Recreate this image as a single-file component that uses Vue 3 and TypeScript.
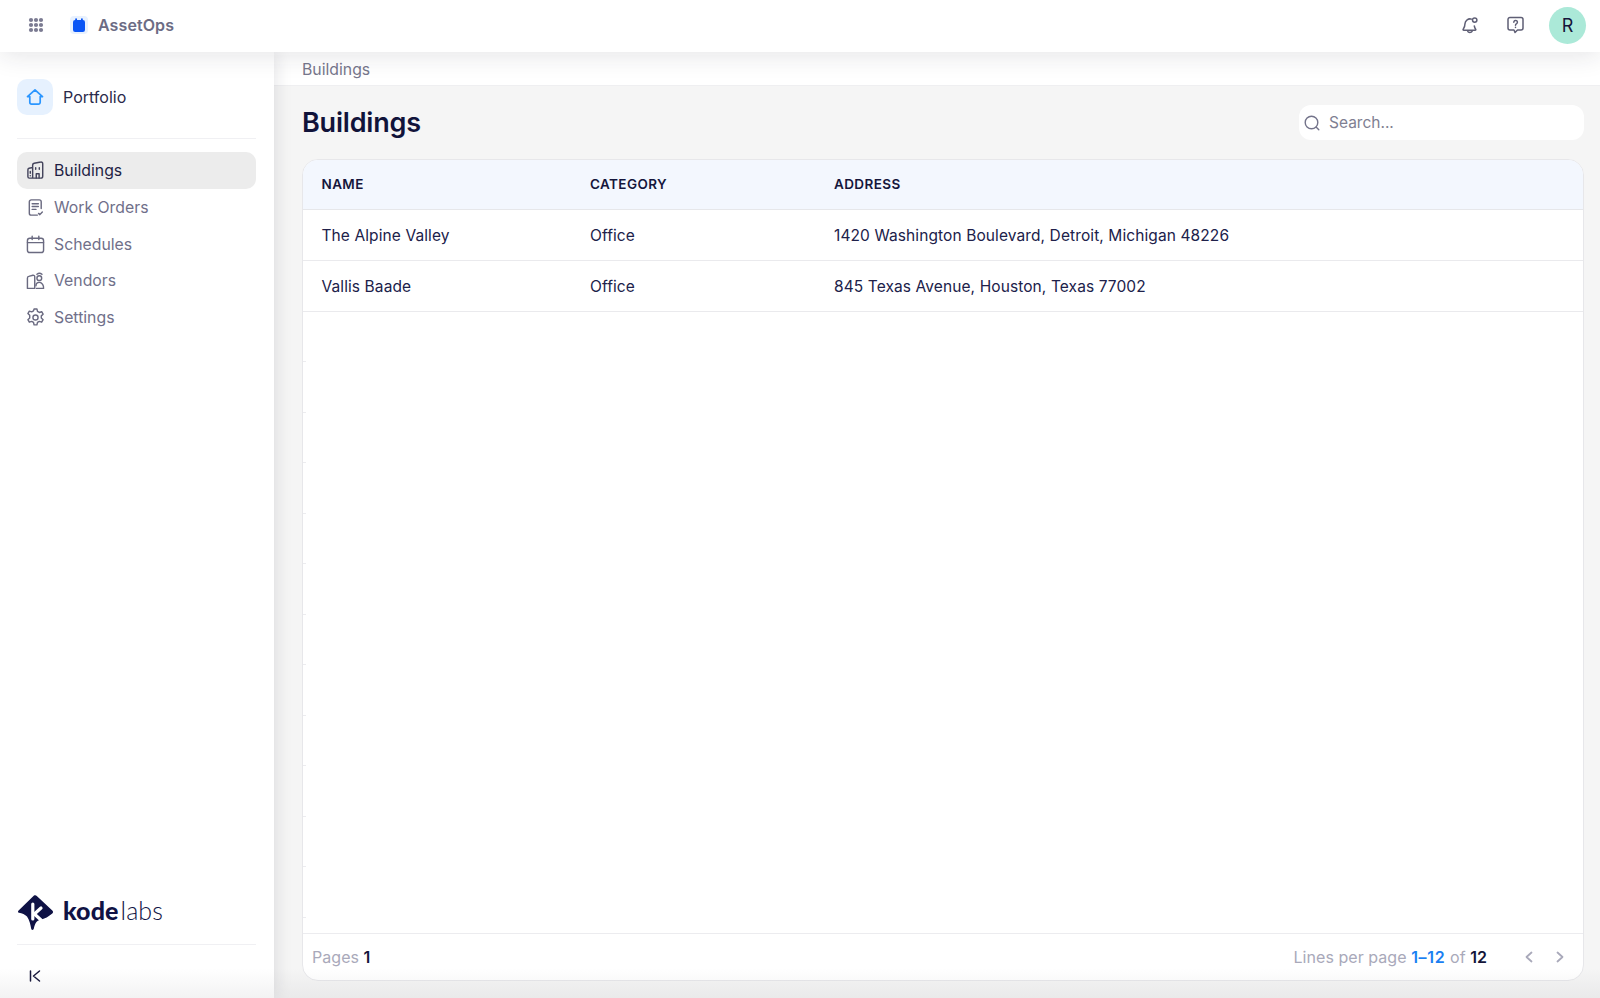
<script setup lang="ts">
interface Building { name: string; category: string; address: string }
const buildings: Building[] = [
  { name: 'The Alpine Valley', category: 'Office', address: '1420 Washington Boulevard, Detroit, Michigan 48226' },
  { name: 'Vallis Baade', category: 'Office', address: '845 Texas Avenue, Houston, Texas 77002' },
]
const emptyRows = 12
const nav = ['Buildings', 'Work Orders', 'Schedules', 'Vendors', 'Settings']
const dots: number[][] = []
for (const y of [3, 8, 13]) for (const x of [3, 8, 13]) dots.push([x, y])
</script>

<template>
  <div class="app">
    <header class="topbar">
      <div class="top-left">
        <svg class="grid-ico" width="16" height="16" viewBox="0 0 16 16">
          <circle v-for="(d, i) in dots" :key="i" :cx="d[0]" :cy="d[1]" r="2.1" fill="#7b7b92" />
        </svg>
        <span class="app-logo">
          <svg width="12" height="14" viewBox="0 0 12 14">
            <rect x="0" y="2" width="12" height="12" rx="2.2" fill="#0a55f5" />
            <rect x="2.2" y="0.2" width="1.8" height="3.6" rx="0.9" fill="#0a55f5" />
            <rect x="8" y="0.2" width="1.8" height="3.6" rx="0.9" fill="#0a55f5" />
          </svg>
        </span>
        <span class="app-name">AssetOps</span>
      </div>
      <div class="top-right">
        <svg class="bell" width="18" height="18" viewBox="0 0 18 18" fill="none" stroke="#5f5f75" stroke-width="1.5" stroke-linecap="round" stroke-linejoin="round">
          <path d="M10.4 3.1A5 5 0 0 0 4 7.6c0 3.4-1.3 5-2 6 0 .4 .2.6.6.6h11.6c.5 0 .7-.3.6-.7-.6-.8-1.3-1.7-1.5-3.6" />
          <path d="M6.8 15.4c.5 1.3 3.600 1.300 4.300 0" />
          <circle cx="13.700" cy="4.100" r="2.200" />
        </svg>
        <svg class="help" width="17" height="18" viewBox="0 0 17 18" fill="none" stroke="#5f5f75" stroke-width="1.5" stroke-linecap="round" stroke-linejoin="round">
          <path d="M3 1.500h11a2 2 0 0 1 2 2v8.500a2 2 0 0 1-2 2h-3.500l-2.500 2.500-1-2.500h-4a2 2 0 0 1-2-2v-8.500a2 2 0 0 1 2-2z" />
          <path d="M6.800 6.200a1.800 1.800 0 1 1 2.800 1.500c-.7.400-1.100.8-1.100 1.500" />
          <path d="M8.500 11.300v.1" />
        </svg>
        <div class="avatar">R</div>
      </div>
    </header>

    <div class="body">
      <aside class="sidebar">
        <div class="portfolio">
          <span class="home-tile">
            <svg width="18" height="18" viewBox="0 0 18 18" fill="none" stroke="#2b96ff" stroke-width="1.700" stroke-linejoin="round" stroke-linecap="round">
              <path d="M1.500 8.600 9 1.800l7.500 6.800h-2.300v5.700a1.800 1.800 0 0 1-1.800 1.800H5.600a1.800 1.800 0 0 1-1.800-1.800V8.600z" />
            </svg>
          </span>
          <span class="portfolio-name">Portfolio</span>
        </div>
        <nav class="nav">
          <a v-for="(item, i) in nav" :key="item" class="nav-item" :class="{ active: i === 0 }">
            <svg class="nav-ico" width="20" height="20" viewBox="0 0 20 20" fill="none" :stroke="i === 0 ? '#44445c' : '#6a6a80'" stroke-width="1.500" stroke-linecap="round" stroke-linejoin="round">
              <template v-if="i === 0">
                <path d="M7 18V4.200c0-1 .7-1.700 1.600-1.900l7-1.200c1-.2 2 .6 2 1.700V16a2 2 0 0 1-2 2H3.500a1.500 1.500 0 0 1-1.500-1.500V9.200c0-.8.500-1.400 1.200-1.600L7 6.800" />
                <path d="M4.500 11v2M10.200 7v1.800M14 7v1.800M10.800 18v-4.500h3v4.500M4.500 15.500v.1" />
              </template>
              <template v-else-if="i === 1">
                <path d="M16 11V4a2 2 0 0 0-2-2H5.500a2 2 0 0 0-2 2v12a2 2 0 0 0 2 2H12" />
                <path d="M6.500 6h6.500M6.500 9h6.500M6.500 12h4M13.200 16.200l1.400 1.300 2.600-2.800" />
              </template>
              <template v-else-if="i === 2">
                <rect x="1.500" y="3.500" width="17" height="15" rx="2.500" />
                <path d="M1.500 8h17M6.500 1.200v3.500M13.500 1.200v3.500" />
              </template>
              <template v-else-if="i === 3">
                <path d="M1.500 18.300V7.500c0-.9.600-1.600 1.400-1.800l4.300-1.200c1-.3 2 .5 2 1.600v11.900M1.500 18.300h7.700" />
                <circle cx="14" cy="7.500" r="2.500" />
                <path d="M11 18.300h7.500c.3-3-1.500-6.300-4.500-6.300s-3.500 2.500-3.500 3.500" />
                <path d="M11.500 3.500a4 4 0 0 1 5.300 0" />
              </template>
              <template v-else>
                <circle cx="10" cy="10" r="2.700" />
                <path d="M8.500 1h3l.6 2.600 1.900 1.100 2.500-.8 1.500 2.600-1.900 1.800v2.200l1.900 1.800-1.500 2.600-2.500-.8-1.900 1.100-.6 2.600h-3l-.6-2.600-1.900-1.100-2.500.8-1.500-2.600 1.900-1.800V7.700L2 5.900l1.500-2.600 2.500.8 1.900-1.100z" />
              </template>
            </svg>
            <span>{{ item }}</span>
          </a>
        </nav>
        <div class="side-bottom">
          <div class="brand">
            <svg width="36" height="36" viewBox="0 0 36 36">
              <path d="M16 .5c1-.6 2-.4 2.800.4l15.500 14.500c1 1 1 2.200 0 3.100-3.500 3-7.500 5.400-12 6.300-3.600.8-5.500 4-6.400 8.500-.3 1.900-2.200 2.200-2.700.4-.8-4.300-1.800-9-4.200-12.200C7.200 19.500 4 18.500 1 17.800c-1.200-.3-1.300-1.400-.4-2.200z" fill="#0f1245" />
              <path d="M14.800 9v15" stroke="#fff" stroke-width="3.200" stroke-linecap="round" fill="none" />
              <path d="M23 13l-6.600 6 6.600 6" stroke="#fff" stroke-width="3.200" fill="none" stroke-linecap="round" stroke-linejoin="round" />
            </svg>
            <span class="brand-text"><b>kode</b><i>labs</i></span>
          </div>
          <div class="collapse">
            <svg width="14" height="14" viewBox="0 0 14 14" fill="none" stroke="#16163a" stroke-width="1.500" stroke-linecap="round" stroke-linejoin="round">
              <path d="M2.500 2v10M11.500 2 5.500 7l6 5" />
            </svg>
          </div>
        </div>
      </aside>

      <main class="main">
        <div class="crumb">Buildings</div>
        <div class="content">
          <div class="title-row">
            <h1>Buildings</h1>
            <label class="search">
              <svg width="16" height="16" viewBox="0 0 16 16" fill="none" stroke="#73738a" stroke-width="1.400" stroke-linecap="round">
                <circle cx="7.500" cy="7.500" r="6.300" />
                <path d="M12.300 12.300 14.800 14.800" />
              </svg>
              <span>Search...</span>
            </label>
          </div>
          <section class="table-card">
            <div class="table-scroll">
              <div class="row head">
                <div>NAME</div><div>CATEGORY</div><div>ADDRESS</div>
              </div>
              <div v-for="b in buildings" :key="b.name" class="row data">
                <div>{{ b.name }}</div><div>{{ b.category }}</div><div>{{ b.address }}</div>
              </div>
              <div v-for="n in emptyRows" :key="n" class="row blank"></div>
            </div>
            <footer class="table-foot">
              <div class="muted">Pages <b class="dark">1</b></div>
              <div class="foot-right">
                <span class="muted">Lines per page <b class="blue">1–12</b> of <b class="dark">12</b></span>
                <span class="pager">
                  <svg width="12" height="14" viewBox="0 0 12 14" fill="none" stroke="#a9a9ba" stroke-width="1.800" stroke-linecap="round" stroke-linejoin="round"><path d="M8.500 2.500 3.500 7l5 4.500" /></svg>
                  <svg width="12" height="14" viewBox="0 0 12 14" fill="none" stroke="#a9a9ba" stroke-width="1.800" stroke-linecap="round" stroke-linejoin="round"><path d="M3.500 2.500 8.500 7l-5 4.500" /></svg>
                </span>
              </div>
            </footer>
          </section>
        </div>
      </main>
      <div class="bottom-fade"></div>
    </div>
  </div>
</template>

<style>
html, body { margin: 0; height: 100%; overflow: hidden; background: #fff; }
</style>

<style scoped>
.app {
  width: 1600px; height: 998px; display: flex; flex-direction: column;
  font-family: Inter, "Liberation Sans", sans-serif; color: #1a1a3c; overflow: hidden;
}
.topbar {
  height: 52px; flex: none; display: flex; align-items: center; justify-content: space-between;
  padding: 0 14px 2px 28px; box-sizing: border-box; background: #fff; position: relative; z-index: 3;
  box-shadow: 0 3px 26px rgba(30, 30, 50, .12);
}
.top-left { display: flex; align-items: center; }
.grid-ico { margin-right: 26px; }
.app-logo {
  width: 18px; height: 18px; border-radius: 4px; background: #e8f1fe;
  display: flex; align-items: center; justify-content: center; margin-right: 10px;
}
.app-name { font-size: 16px; font-weight: 600; color: #6c6c84; letter-spacing: .1px; }
.top-right { display: flex; align-items: center; }
.bell { margin-right: 28px; }
.help { margin-right: 25px; }
.avatar {
  width: 37px; height: 37px; border-radius: 50%; background: #abe9d8; color: #16163a;
  font-size: 18px; display: flex; align-items: center; justify-content: center;
}
.body { flex: 1; display: flex; min-height: 0; position: relative; }
.sidebar {
  width: 274px; flex: none; background: #fff; display: flex; flex-direction: column;
  padding: 27px 18px 0 17px; box-sizing: border-box; position: relative; z-index: 2;
  box-shadow: 2px 0 16px rgba(30, 30, 50, .11);
}
.portfolio {
  display: flex; align-items: center; gap: 10px; height: 36px;
  padding-bottom: 23px; border-bottom: 1px solid #f0f0f3; margin-bottom: 13.400px;
}
.home-tile {
  width: 36px; height: 36px; border-radius: 10px; background: #e6f1fe;
  display: flex; align-items: center; justify-content: center;
}
.portfolio-name { font-size: 16px; color: #2a2a4a; }
.nav { display: flex; flex-direction: column; }
.nav-item {
  height: 36.700px; display: flex; align-items: center; gap: 9px; padding-left: 9px;
  border-radius: 10px; font-size: 15.800px; color: #70708a;
}
.nav-item.active { background: #ececec; color: #1f1f45; }
.nav-ico { flex: none; width: 19px; height: 19px; }
.side-bottom { margin-top: auto; }
.brand {
  display: flex; align-items: center; gap: 9px; height: 36px;
  padding: 0 0 13px 1px; border-bottom: 1px solid #f0f0f3;
}
.brand-text {
  font-family: Lato, "Liberation Sans", sans-serif; font-size: 25px; color: #101345;
  letter-spacing: .1px; display: flex; position: relative; top: -3px;
}
.brand-text b { font-weight: 900; }
.brand-text i { font-style: normal; font-weight: 300; margin-left: 2px; }
.collapse {
  height: 53px; display: flex; align-items: center; padding-left: 11px; padding-top: 8px; box-sizing: border-box;
}
.main { flex: 1; min-width: 0; display: flex; flex-direction: column; background: #f5f5f5; }
.crumb {
  height: 34px; flex: none; box-sizing: border-box; padding: 8px 0 0 28px; background: #fff;
  border-bottom: 1px solid #efeff1; font-size: 15.800px; color: #77778c; line-height: 20px;
}
.content { flex: 1; min-height: 0; display: flex; flex-direction: column; padding: 0 16px 17px 28px; }
.title-row { height: 73px; flex: none; display: flex; align-items: center; justify-content: space-between; }
h1 { margin: 0; font-size: 27px; font-weight: 600; color: #11133a; letter-spacing: -.2px; }
.search {
  width: 285px; height: 35px; box-sizing: border-box; background: #fff; border-radius: 12px;
  display: flex; align-items: center; gap: 9px; padding-left: 5px; font-size: 15.500px; color: #7f7f92;
}
.table-card {
  flex: 1; min-height: 0; display: flex; flex-direction: column; background: #fff;
  border: 1px solid #e7e7ea; border-radius: 16px; overflow: hidden;
}
.table-scroll { flex: 1; min-height: 0; overflow: hidden; }
.row { display: grid; grid-template-columns: 268.500px 244px 1fr; padding-left: 18.500px; align-items: center; box-sizing: border-box; }
.head {
  height: 50px; background: #f3f7fe; border-bottom: 1px solid #e6e7ea;
  font-size: 13.500px; font-weight: 600; color: #15163c; letter-spacing: .4px; padding-bottom: 1px;
}
.data { height: 50.500px; border-bottom: 1px solid #eaeaed; font-size: 15.500px; color: #20214a; letter-spacing: .1px; padding-top: 1px; }
.data + .data { height: 51px; }
.blank { height: 50.500px; position: relative; }
.blank::before { content: ""; position: absolute; left: 0; bottom: 0; width: 3px; height: 1px; background: #ececef; }
.table-foot {
  height: 47px; flex: none; box-sizing: border-box; border-top: 1px solid #ececef;
  display: flex; align-items: center; justify-content: space-between; padding: 0 17px 0 9px; font-size: 16px; letter-spacing: .05px;
}
.muted { color: #a9a9ba; }
.muted b { font-weight: 600; }
.dark { color: #14153a; }
.blue { color: #1a80f2; letter-spacing: .7px; }
.foot-right { display: flex; align-items: center; }
.pager { display: flex; gap: 19px; margin-left: 36px; }
.bottom-fade {
  position: absolute; left: 0; right: 0; bottom: 0; height: 30px; pointer-events: none; z-index: 4;
  background: linear-gradient(to bottom, rgba(120,120,125,0), rgba(120,120,125,.09));
}
</style>
